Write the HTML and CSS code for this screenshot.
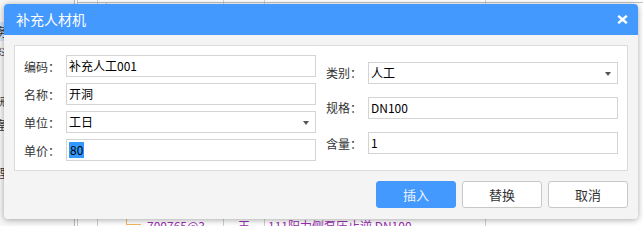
FILE: index.html
```html
<!DOCTYPE html>
<html lang="zh-CN">
<head>
<meta charset="utf-8">
<title>补充人材机</title>
<link rel="stylesheet" href="styles.css">
</head>
<body>
<div class="app">
  <div class="side">
    <div class="side-item first"></div>
    <div class="side-item active"><span class="side-text">劳务</span></div>
    <div class="side-item"><span class="side-text">材料</span></div>
    <div class="side-item"></div>
    <div class="side-item"><span class="side-text">机械</span></div>
    <div class="side-item"><span class="side-text">设备</span></div>
    <div class="side-item"></div>
    <div class="side-item"><span class="side-text">管理</span></div>
  </div>
  <div class="grid">
    <div class="grid-row head">
      <div class="cell c1"></div><div class="cell c2"></div><div class="cell c3"></div><div class="cell c4"></div><div class="cell c5"></div>
    </div>
    <div class="grid-row filler">
      <div class="cell c1"></div><div class="cell c2"><span class="tree-v"></span></div><div class="cell c3"></div><div class="cell c4"></div><div class="cell c5"></div>
    </div>
    <div class="grid-row data">
      <div class="cell c1"></div>
      <div class="cell c2"><span class="tree-l"></span><span class="code">700765@3</span></div>
      <div class="cell c3"><span class="code">王</span></div>
      <div class="cell c4"><span class="code">111阳力侧泵压止逆 DN100</span></div>
      <div class="cell c5"></div>
    </div>
  </div>
</div>

<div class="dialog">
  <div class="dlg-head">
    <span class="dlg-title">补充人材机</span>
    <span class="dlg-close">
      <svg width="11" height="9" viewBox="0 0 11 9"><path d="M1.2 0.8 L9.8 8.2 M9.8 0.8 L1.2 8.2" stroke="#fff" stroke-width="2.4" stroke-linecap="butt" fill="none"/></svg>
    </span>
  </div>
  <div class="dlg-body">
    <div class="panel">
      <div class="col col-left">
        <div class="field"><span class="label">编码：</span><div class="input">补充人工001</div></div>
        <div class="field"><span class="label">名称：</span><div class="input">开洞</div></div>
        <div class="field"><span class="label">单位：</span><div class="input select">工日<span class="arrow"></span></div></div>
        <div class="field"><span class="label">单价：</span><div class="input"><span class="selected">80</span></div></div>
      </div>
      <div class="col col-right">
        <div class="field"><span class="label">类别：</span><div class="input select">人工<span class="arrow"></span></div></div>
        <div class="field"><span class="label">规格：</span><div class="input">DN100</div></div>
        <div class="field"><span class="label">含量：</span><div class="input">1</div></div>
      </div>
    </div>
    <div class="actions">
      <button class="btn primary">插入</button>
      <button class="btn">替换</button>
      <button class="btn">取消</button>
    </div>
  </div>
</div>
</body>
</html>
```

FILE: styles.css
```css
html, body {
  margin: 0;
  padding: 0;
}
body {
  width: 643px;
  height: 226px;
  overflow: hidden;
  position: relative;
  background: #ffffff;
  font-family: "Noto Sans CJK SC", "Noto Sans", sans-serif;
  font-size: 12px;
  color: #333;
}

/* ---------- background application ---------- */
.app {
  display: flex;
  height: 226px;
  overflow: hidden;
}
.side {
  width: 74px;
  border-right: 1px solid #b8b8b8;
  background: #f7f7f7;
  overflow: hidden;
  flex: none;
}
.side-item {
  height: 24px;
  line-height: 24px;
  white-space: nowrap;
  overflow: hidden;
}
.side-item.first { height: 22px; }
.side-item.active {
  height: 19px;
  line-height: 19px;
  background: #cfe4f7;
}
.side-text {
  display: inline-block;
  margin-left: -16px;
  color: #333;
}
.grid {
  margin-left: 2px;
  border-left: 1px solid #c8c8c8;
  flex: 1;
  display: flex;
  flex-direction: column;
}
.grid-row {
  display: flex;
  flex: none;
}
.grid-row.head {
  height: 2px;
  border-bottom: 1px solid #c4c4c4;
}
.grid-row.filler {
  height: 215px;
}
.grid-row.data {
  height: 24px;
  line-height: 16px;
}
.cell {
  border-right: 1px solid #d0d0d0;
  box-sizing: border-box;
  white-space: nowrap;
  overflow: hidden;
  position: relative;
}
.c1 { width: 20px; }
.c2 { width: 126px; }
.c3 { width: 41px; }
.c4 { width: 221px; }
.c5 { flex: 1; border-right: none; }
.grid-row.data .c2 { padding-left: 28px; }
.grid-row.data .c3 { padding-left: 14px; }
.grid-row.data .c4 { padding-left: 3px; }
.tree-v {
  display: block;
  margin-left: 8px;
  width: 0;
  height: 100%;
  border-left: 1px solid #f0b860;
}
.tree-l {
  display: inline-block;
  vertical-align: top;
  width: 14px;
  height: 6px;
  margin-right: 6px;
  border-left: 1px solid #f0b860;
  border-bottom: 1px solid #f0b860;
}
.code {
  color: #9a2fb0;
}

/* ---------- dialog ---------- */
.dialog {
  position: absolute;
  left: 4px;
  top: 4px;
  width: 634px;
  height: 215px;
  background: #f4f4f4;
  border-radius: 4px;
  box-shadow: 0 1px 6px rgba(0, 0, 0, 0.35);
  display: flex;
  flex-direction: column;
  overflow: hidden;
}
.dlg-head {
  height: 31px;
  background: #4499ff;
  display: flex;
  align-items: center;
  justify-content: space-between;
  padding: 0 10px 0 12px;
  flex: none;
}
.dlg-title {
  color: #ffffff;
  font-size: 14px;
  line-height: 31px;
}
.dlg-close {
  display: flex;
  align-items: center;
  height: 9px;
}
.dlg-close svg { display: block; }
.dlg-body {
  padding: 10px;
  display: flex;
  flex-direction: column;
}
.panel {
  background: #ffffff;
  border: 1px solid #dcdcdc;
  padding: 9px;
  display: flex;
  gap: 10px;
  box-sizing: border-box;
  height: 126px;
}
.col {
  display: flex;
  flex-direction: column;
  width: 292px;
}
.col-left { gap: 6px; }
.col-right { justify-content: space-around; }
.field {
  display: flex;
  align-items: center;
  height: 22px;
}
.label {
  width: 42px;
  flex: none;
  color: #333;
  white-space: nowrap;
}
.input {
  width: 250px;
  height: 22px;
  box-sizing: border-box;
  border: 1px solid #d4d4d4;
  padding: 0 2px;
  line-height: 20px;
  color: #000;
  position: relative;
  background: #fff;
  white-space: nowrap;
}
.select .arrow {
  position: absolute;
  right: 6px;
  top: 9px;
  width: 0;
  height: 0;
  border-left: 3px solid transparent;
  border-right: 3px solid transparent;
  border-top: 4px solid #555;
}
.selected {
  display: inline-block;
  background: #3399ff;
  color: #000;
  line-height: 16px;
  padding: 0 1px;
}
.actions {
  margin-top: 10px;
  display: flex;
  justify-content: flex-end;
  gap: 6px;
}
.btn {
  width: 80px;
  height: 27px;
  border: 1px solid #c8c8c8;
  border-radius: 3px;
  background: #ffffff;
  color: #333;
  font-family: "Noto Sans CJK SC", "Noto Sans", sans-serif;
  font-size: 13px;
  padding: 0;
  line-height: 25px;
}
.btn.primary {
  background: #4499ff;
  border-color: #4499ff;
  color: #eef5ff;
}
```
